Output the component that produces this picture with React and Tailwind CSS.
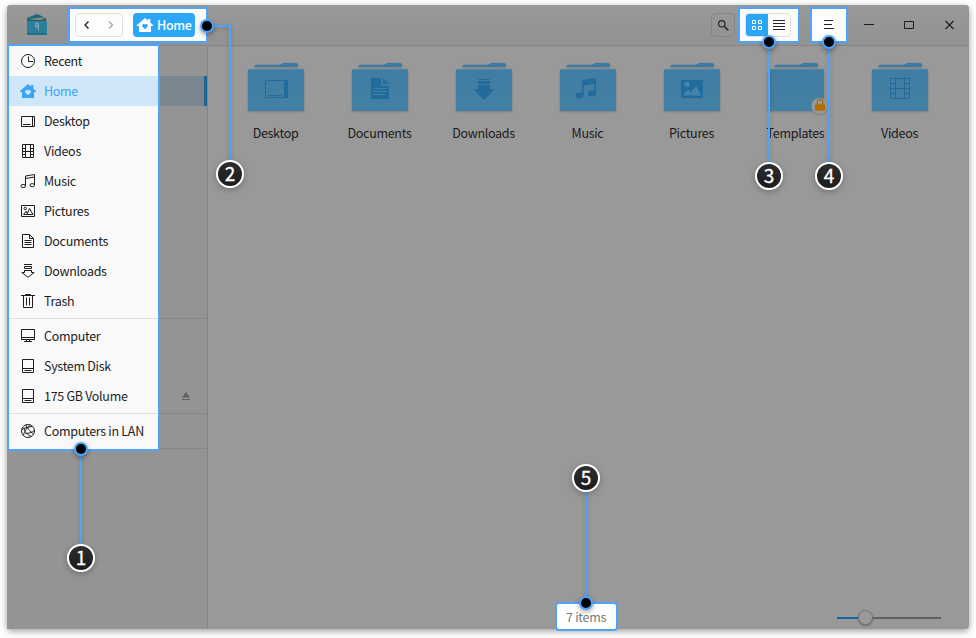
import React from "react";

const stroke = {
  fill: "none",
  stroke: "currentColor",
  strokeWidth: 1,
};

// 14px line icons of the sidebar
function Glyph({ name }) {
  const shapes = {
    recent: (
      <g {...stroke}>
        <circle cx="7" cy="7" r="6.5" />
        <path d="M7.500 2.500v5H12" />
      </g>
    ),
    home: (
      <path
        fill="currentColor"
        fillRule="evenodd"
        d="M7 0 10 2.500V1h2.300v3.500L15 7v1h-2v6H1V8h-2V7zM7 11.200l2.300-2.200c1.700-1.900-.6-4.200-2.300-2.400-1.700-1.800-4 .5-2.300 2.400z"
      />
    ),
    desktop: (
      <g {...stroke}>
        <path d="M.5 2.500h13v10H.5zM11.500 2.500v10M2 10.500h7.500" />
      </g>
    ),
    videos: (
      <g {...stroke}>
        <path d="M1.500.5h11v13h-11zM4.500.5v13M9.500.5v13M4.500 7.500h5M1.500 4.500h3M1.500 7.500h3M1.500 10.500h3M9.500 4.500h3M9.500 7.500h3M9.500 10.500h3" />
      </g>
    ),
    music: (
      <g {...stroke}>
        <path d="M4.500 11.500V2l9-1.500v10.500M4.500 4.500l9-1.500" />
        <ellipse cx="2.200" cy="12" rx="2.300" ry="1.600" />
        <ellipse cx="11.200" cy="11.200" rx="2.300" ry="1.600" />
      </g>
    ),
    pictures: (
      <g {...stroke}>
        <path d="M.5 1.500h13v11H.5zM2.500 10.500l2.500-3 1.500 1.500 2-4.500 3.500 6zM5 7.500l2 3" />
        <circle cx="4.200" cy="4.500" r="1.200" />
      </g>
    ),
    documents: (
      <g {...stroke}>
        <path d="M1.500.5h7l4 4v9h-11zM8.500.5v4h4M3.500 6.500h7M3.500 8.500h7M3.500 10.500h7" />
      </g>
    ),
    downloads: (
      <g {...stroke}>
        <path d="M3 .5h8M3.500 2.500h7v2h-7zM3.500 6.500h7M3.500 6v2.500H.8L7 13.300l6.200-4.800h-2.700V6" />
      </g>
    ),
    trash: (
      <g {...stroke}>
        <path d="M0 1.500h14M4.500 1.500v-1h5v1M2.500 1.500v12h9v-12M5.500 3.500v8M8.500 3.500v8" />
      </g>
    ),
    computer: (
      <g {...stroke}>
        <path d="M.5.5h13v10H.5zM.5 8.500h13M5.500 10.500v2M8.500 10.500v2M3 12.500h8" />
      </g>
    ),
    disk: (
      <g {...stroke}>
        <path d="M1.500.5h11v13h-11zM1.500 9.500h11M3.500 11.500h7" />
      </g>
    ),
    lan: (
      <g {...stroke}>
        <circle cx="7" cy="7" r="6.500" />
        <path d="M5 .8C5.500 3.500 9 7.500 12.500 10M.8 5.500C4 3.500 8 3 11.500 2.500M2.500 11.500C3 8 5 4.500 9.500 1M3 3.800C3.500 7.500 6 11 10.500 12.500M4.500 9.500C7.500 9.500 11 8.500 13.300 6.500" />
      </g>
    ),
  };
  return (
    <svg width="14" height="14" viewBox="0 0 14 14" className="shrink-0 overflow-visible">
      {shapes[name]}
    </svg>
  );
}

const groups = [
  [
    ["recent", "Recent"],
    ["home", "Home"],
    ["desktop", "Desktop"],
    ["videos", "Videos"],
    ["music", "Music"],
    ["pictures", "Pictures"],
    ["documents", "Documents"],
    ["downloads", "Downloads"],
    ["trash", "Trash"],
  ],
  [
    ["computer", "Computer"],
    ["disk", "System Disk"],
    ["disk", "175 GB Volume"],
  ],
  [["lan", "Computers in LAN"]],
];

function Divider({ dim }) {
  return (
    <div className="h-[5px] pt-[2px]">
      <div className={dim ? "h-px bg-[#868686]" : "h-px bg-[#dfdfdf]"} />
    </div>
  );
}

function Sidebar() {
  return (
    <aside className="flex w-[201px] shrink-0 items-start border-r border-[#868686] bg-[#949494]">
      <nav className="relative z-10 -mt-[2px] h-[407px] w-[153px] shrink-0 border-2 border-[#4ea4fb] bg-[#f9f9f9]">
        {groups.map((rows, i) => (
          <React.Fragment key={i}>
            {i > 0 && <Divider />}
            {rows.map(([icon, label]) => (
              <div
                key={label}
                className={
                  icon === "home"
                    ? "flex h-[30px] items-center gap-[9px] bg-[#d0e7fa] pl-3 text-[#3ba4f5]"
                    : "flex h-[30px] items-center gap-[9px] pl-3 text-[#1e1e1e]"
                }
              >
                <Glyph name={icon} />
                <span className="whitespace-nowrap">{label}</span>
              </div>
            ))}
          </React.Fragment>
        ))}
      </nav>
      <div className="flex-1">
        {groups.map((rows, i) => (
          <React.Fragment key={i}>
            {i > 0 && <Divider dim />}
            {rows.map(([icon, label]) => (
              <div
                key={label}
                className={
                  icon === "home"
                    ? "h-[30px] border-r-[3px] border-[#1a6697] bg-[#7a8790]"
                    : "flex h-[30px] items-center pl-[22px]"
                }
              >
                {label === "175 GB Volume" && (
                  <svg width="8" height="8" viewBox="0 0 8 8" fill="#606060">
                    <path d="M4 0 8 5.500H0zM0 7h8v1H0z" />
                  </svg>
                )}
              </div>
            ))}
          </React.Fragment>
        ))}
        <Divider dim />
      </div>
    </aside>
  );
}

const emblems = {
  Desktop: (
    <g>
      <path fill="none" stroke="#226b9d" d="M17.500 18.500h22v17h-22zM19 33.500h15" />
      <path fill="#226b9d" d="M36 18h4v18h-4z" />
    </g>
  ),
  Documents: (
    <g>
      <path fill="#226b9d" d="M19 16h10v8h8v13H19zM31 16l6 6h-6z" />
      <path stroke="#427fa5" d="M21 26.500h14M21 29.500h14M21 32.500h11" />
    </g>
  ),
  Downloads: <path fill="#226b9d" d="M22 17h12v1H22zM22 19h12v3H22zM22 23h12v4h5L28 38 17 27h5z" />,
  Music: (
    <g fill="#226b9d">
      <path d="M22 18l14-2v15h-1.500v-9L23.500 23.500V34H22z" />
      <ellipse cx="19.500" cy="33.500" rx="4" ry="3" />
      <ellipse cx="32" cy="31.500" rx="4" ry="3" />
    </g>
  ),
  Pictures: (
    <g>
      <path fill="#226b9d" d="M17 18h22v18H17z" />
      <circle cx="23" cy="22.500" r="2.800" fill="#4583aa" />
      <path fill="#4583aa" d="M19 33.500l5-6 3 3 5-7 5 10z" />
    </g>
  ),
  Templates: null,
  Videos: (
    <path
      fill="none"
      stroke="#226b9d"
      d="M18.500 16.500h19v20h-19zM23.500 16.500v20M32.500 16.500v20M23.500 26.500h9M18.500 21.500h5M18.500 26.500h5M18.500 31.500h5M32.500 21.500h5M32.500 26.500h5M32.500 31.500h5"
    />
  ),
};

function Folder({ name }) {
  return (
    <div className="flex w-[104px] flex-col items-center">
      <svg width="56" height="52" viewBox="0 0 56 52" className="overflow-visible drop-shadow-[0_1px_1px_rgba(0,0,0,0.2)]">
        <defs>
          <linearGradient id={"body" + name} x1="0" y1="0" x2="0" y2="1">
            <stop offset="0" stopColor="#417da3" />
            <stop offset="1" stopColor="#4480a3" />
          </linearGradient>
        </defs>
        <path fill="#3a7aa5" d="M6 7l1.500-2.200H32L36 3h12.500q1.500 0 1.500 1.500V7z" />
        <rect y="9" width="56" height="42" rx="1.500" fill={"url(#body" + name + ")"} />
        <path stroke="#4a86ac" d="M1 9.500h54" />
        <g transform="translate(0 2)">{emblems[name]}</g>
        {name === "Templates" && (
          <g>
            <circle cx="51.500" cy="46" r="8" fill="#999" />
            <path d="M49.300 44.500v-2.300a2.700 2.700 0 0 1 5.400 0v2.300" fill="none" stroke="#a5700d" strokeWidth="1.300" />
            <rect x="47" y="44.300" width="10" height="6.500" rx="1" fill="#b06f02" />
          </g>
        )}
      </svg>
      <span className="mt-[11px] -ml-px leading-5 text-[#1b1b1b]">{name}</span>
    </div>
  );
}

function Header() {
  return (
    <header className="flex h-[41px] shrink-0 items-start rounded-t border-b border-[#858585] bg-linear-to-b from-[#999999] to-[#929292] pt-[2px]">
      <svg width="22" height="24" viewBox="0 0 22 24" className="mt-[6px] ml-[19px]">
        <path fill="#1c6880" d="M1 5 11 1l9 4v4H1z" />
        <path fill="#898a68" d="M3 6l16-2v3H3z" />
        <path fill="#176078" d="M1 6l13 1.500 6-2.500v4H1z" />
        <path fill="#2b7f98" d="M1 8h20v14H1z" />
        <path fill="#1c6f8d" d="M1 20h20v2H1z" />
        <path fill="#83a4ad" fillRule="evenodd" d="M9 11q0-1.500 1.500-1.500h1Q13 9.500 13 11v7l-1.300-1v-2.500H9zM10.300 11v2.300h1.200V11z" />
      </svg>
      <div className="ml-5 flex h-9 w-[140px] items-center border-2 border-[#4ea4fb] bg-[#fdfdfd] pl-[5px]">
        <div className="flex h-6 w-12 items-center justify-between rounded border border-[#e0e0e0] pr-2 pl-[8px]">
          <svg width="6" height="8" viewBox="0 0 6 8" fill="none" stroke="#222" strokeWidth="1.400">
            <path d="M4.500 .5 1 4 4.500 7.500" />
          </svg>
          <svg width="6" height="8" viewBox="0 0 6 8" fill="none" stroke="#aaa" strokeWidth="1.400">
            <path d="M1 .5 4.500 4 1 7.500" />
          </svg>
        </div>
        <div className="ml-[10px] flex h-6 w-[62px] items-center gap-[5px] rounded bg-[#2ca7f8] pl-[5px] text-white">
          <Glyph name="home" />
          <span className="font-medium">Home</span>
        </div>
      </div>
      <div className="mt-[6px] ml-auto flex h-6 w-6 items-center justify-center rounded border border-[#858585]">
        <svg width="11" height="11" viewBox="0 0 11 11" fill="none" stroke="#202020">
          <circle cx="3.800" cy="3.800" r="3.200" strokeWidth="1.100" />
          <path d="M6.300 6.300l4 4" strokeWidth="1.500" />
        </svg>
      </div>
      <div className="ml-[3px] flex h-9 w-[62px] items-center border-2 border-[#4ea4fb] bg-[#fdfdfd] pl-[5px]">
        <div className="flex h-6 w-[46px] overflow-hidden rounded border border-[#e0e0e0]">
          <div className="flex w-[22px] items-center justify-center bg-[#2ca7f8]">
            <svg width="10" height="10" viewBox="0 0 10 10" fill="none" stroke="#fff">
              <path d="M.5.5h3v3h-3zM6.500.5h3v3h-3zM.5 6.500h3v3h-3zM6.500 6.500h3v3h-3z" />
            </svg>
          </div>
          <div className="flex w-[22px] items-center justify-center">
            <svg width="12" height="10" viewBox="0 0 12 10" stroke="#222">
              <path d="M0 .5h12M0 3.500h12M0 6.500h12M0 9.500h12" />
            </svg>
          </div>
        </div>
      </div>
      <div className="ml-[10px] flex h-9 w-[38px] items-center justify-center border-2 border-[#4ea4fb] bg-[#fdfdfd]">
        <svg width="10" height="10" viewBox="0 0 10 10" stroke="#222">
          <path d="M0 .5h9M0 4.500h8M0 8.500h10" />
        </svg>
      </div>
      <svg width="90" height="10" viewBox="0 0 90 10" fill="none" stroke="#1c1c1c" className="mt-[13px] mr-[15px] ml-4">
        <path d="M0 4.500h10M40.500 1.500h9v7h-9z" />
        <path d="M81.500 1l8 8M89.500 1l-8 8" strokeWidth="1.100" />
      </svg>
    </header>
  );
}

function Badge({ n, place }) {
  return (
    <div
      className={
        "absolute flex h-7 w-7 items-center justify-center rounded-full border-2 border-white bg-linear-to-b from-[#2e2e2e] to-[#1c1c1c] pb-[3px] text-[19px] leading-none tracking-normal text-white shadow-[0_2px_6px_rgba(0,0,0,0.25)] [-webkit-text-stroke:0.3px_white] " +
        place
      }
    >
      {n}
    </div>
  );
}

function Dot({ place }) {
  return (
    <div
      className={
        "absolute h-[14px] w-[14px] rounded-full border-2 border-[#4ea4fb] bg-black shadow-[0_2px_5px_rgba(0,0,0,0.35)] " +
        place
      }
    />
  );
}

function Line({ place }) {
  return <div className={"absolute bg-[#4ea4fb] shadow-[0_2px_5px_rgba(0,0,0,0.2)] " + place} />;
}

// Numbered annotations floating above the window
function Callouts() {
  return (
    <div className="pointer-events-none absolute inset-0 z-20">
      <Line place="left-[80px] top-[449px] h-[97px] w-[2px]" />
      <Dot place="left-[74px] top-[442px]" />
      <Badge n="1" place="left-[67px] top-[544px]" />
      <Line place="left-[207px] top-[25px] h-[2px] w-[24px]" />
      <Line place="left-[229px] top-[25px] h-[137px] w-[2px]" />
      <Dot place="left-[200px] top-[19px]" />
      <Badge n="2" place="left-[216px] top-[160px]" />
      <Line place="left-[768px] top-[42px] h-[122px] w-[2px]" />
      <Dot place="left-[762px] top-[35px]" />
      <Badge n="3" place="left-[755px] top-[162px]" />
      <Line place="left-[828px] top-[42px] h-[122px] w-[2px]" />
      <Dot place="left-[822px] top-[35px]" />
      <Badge n="4" place="left-[815px] top-[162px]" />
      <Line place="left-[585px] top-[490px] h-[112px] w-[2px]" />
      <Dot place="left-[579px] top-[596px]" />
      <Badge n="5" place="left-[572px] top-[464px]" />
    </div>
  );
}

export default function App() {
  return (
    <div className="relative h-[638px] w-[976px] overflow-hidden bg-white pt-[5px] pl-[7px] font-['Noto_Sans_CJK_SC',sans-serif] text-[12.5px] tracking-[-0.3px]">
      <div className="flex h-[624px] w-[962px] flex-col rounded bg-[#999999] shadow-[0_2px_7px_rgba(0,0,0,0.4)]">
        <Header />
        <div className="flex min-h-0 flex-1">
          <Sidebar />
          <main className="flex flex-1 flex-col">
            <div className="flex pt-[14px] pl-4">
              {Object.keys(emblems).map((name) => (
                <Folder key={name} name={name} />
              ))}
            </div>
            <footer className="mt-auto flex h-[27px] items-start">
              <div className="ml-[347px] flex h-[29px] w-[63px] shrink-0 items-center justify-center rounded-sm border-2 border-[#4ea4fb] bg-white pt-[2px] pr-px text-[#777]">
                7 items
              </div>
              <div className="mt-2 mr-7 ml-auto flex items-center">
                <div className="h-[2px] w-[21px] bg-[#1a6697]" />
                <div className="h-[15px] w-[15px] rounded-full border border-[#777] bg-[#999] shadow-[0_1px_2px_rgba(0,0,0,0.35)]" />
                <div className="h-[2px] w-[68px] bg-[#606060]" />
              </div>
            </footer>
          </main>
        </div>
      </div>
      <Callouts />
    </div>
  );
}
